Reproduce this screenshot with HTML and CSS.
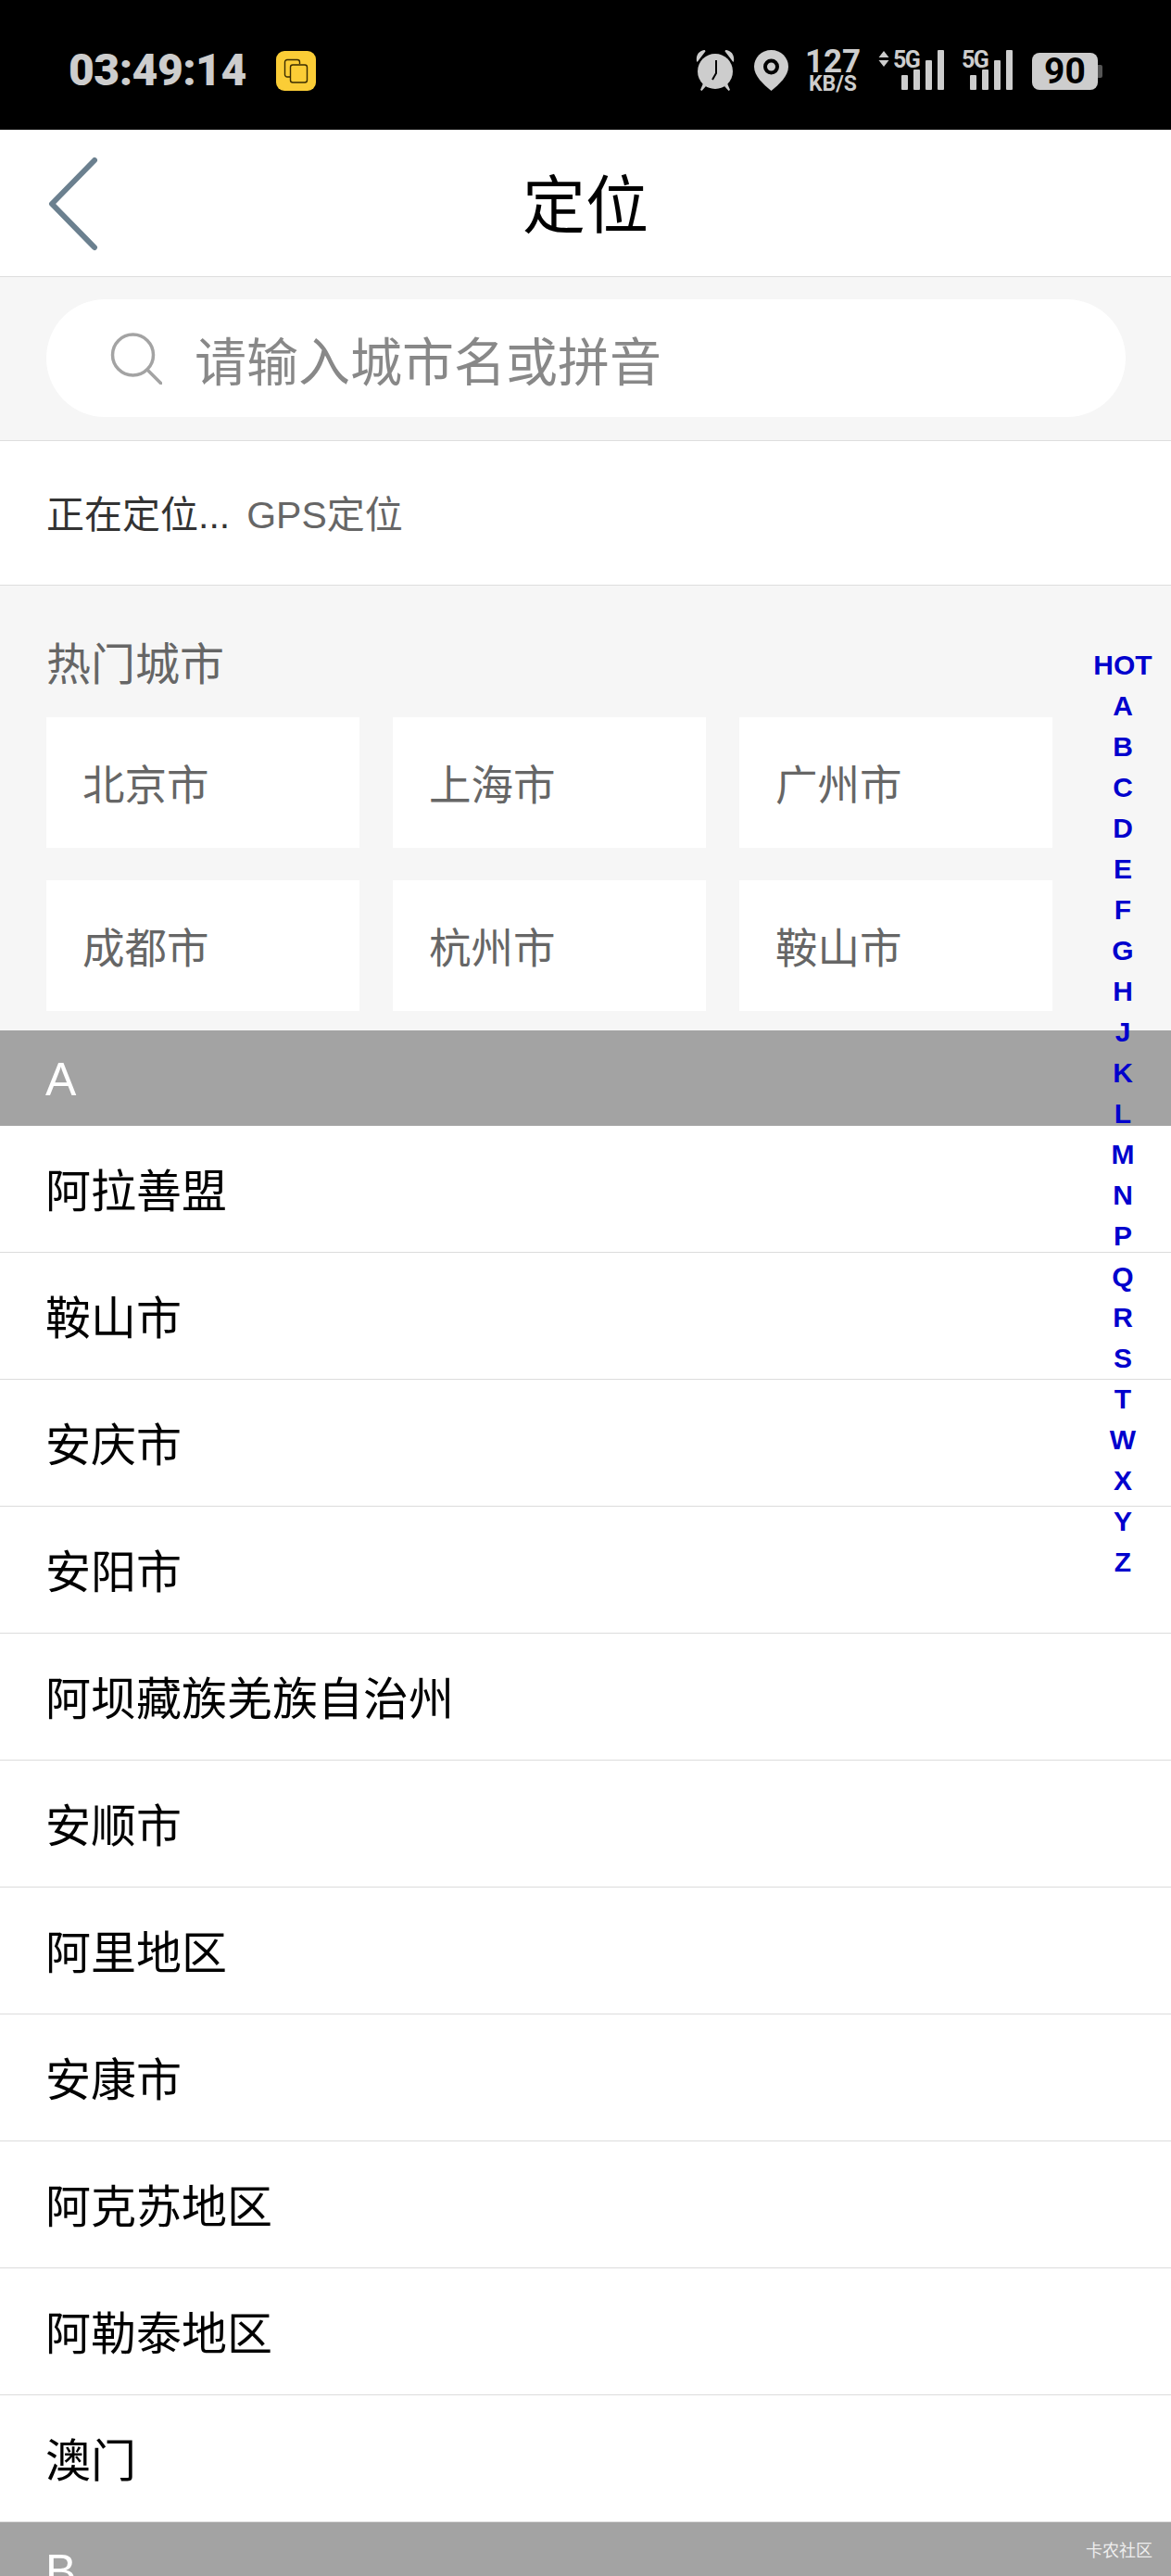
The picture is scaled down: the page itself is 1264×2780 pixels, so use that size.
FILE: index.html
```html
<!DOCTYPE html>
<html lang="zh-CN">
<head>
<meta charset="UTF-8">
<meta name="viewport" content="width=device-width, initial-scale=1.0">
<title>定位</title>
<link rel="stylesheet" href="styles.css">
</head>
<body>
<div class="status-bar">
    <div class="status-left">
        <span class="clock">03:49:14</span>
        <span class="app-badge">
            <svg width="27" height="27" viewBox="0 0 27 27" fill="none" stroke="#3a2c00" stroke-width="1.4">
                <path d="M7 20H4a2.500 2.500 0 0 1-2.500-2.500V4A2.500 2.500 0 0 1 4 1.500h11A2.500 2.500 0 0 1 17.500 4v2"/>
                <rect x="7.500" y="7" width="18" height="19" rx="2.500"/>
            </svg>
        </span>
    </div>
    <div class="status-right">
        <svg class="icon-alarm" width="44" height="46" viewBox="0 0 44 46" fill="#cdcdcd">
            <path d="M2 13C1 7 4 2 10 1c1 0 2 1 1 2L3 13.500c-.4.500-.9.300-1-.5zM42 13c1-6-2-11-8-12-1 0-2 1-1 2l8 10.500c.4.500.9.300 1-.5z"/>
            <path d="M9 37l-3 7 1.500 1L12 40zM35 37l3 7-1.500 1L32 40z"/>
            <circle cx="22" cy="24" r="19"/>
            <path d="M23 12v14l-4 7" fill="none" stroke="#000" stroke-width="2"/>
        </svg>
        <svg class="icon-pin" width="37" height="44" viewBox="0 0 37 44">
            <path d="M18.500 0C8 0 0 8 0 18c0 10 10 19 18.500 26C27 37 37 28 37 18 37 8 29 0 18.500 0z" fill="#cdcdcd"/>
            <circle cx="18.500" cy="18" r="6.500" fill="none" stroke="#000" stroke-width="4"/>
        </svg>
        <div class="net-speed">
            <span class="net-num">127</span>
            <span class="net-unit">KB/S</span>
        </div>
        <div class="signal signal-first">
            <svg class="signal-arrows" width="12" height="17" viewBox="0 0 12 17" fill="#cdcdcd">
                <path d="M6 0l5.500 7H.5zM6 17l5.500-7H.5z"/>
            </svg>
            <span class="signal-label">5G</span>
            <div class="bars">
                <i class="bar bar-1"></i><i class="bar bar-2"></i><i class="bar bar-3"></i><i class="bar bar-4"></i>
            </div>
        </div>
        <div class="signal signal-second">
            <span class="signal-label">5G</span>
            <div class="bars">
                <i class="bar bar-1"></i><i class="bar bar-2"></i><i class="bar bar-3"></i><i class="bar bar-4"></i>
            </div>
        </div>
        <div class="battery">
            <span class="battery-body">90</span>
            <i class="battery-nub"></i>
        </div>
    </div>
</div>

<header class="nav-bar">
    <svg class="back" width="56" height="102" viewBox="0 0 56 102" fill="none" stroke="#6b808f" stroke-width="6" stroke-linecap="round" stroke-linejoin="round">
        <path d="M52 4L6 51l46 47"/>
    </svg>
    <h1 class="nav-title">定位</h1>
</header>

<div class="search-wrap">
    <div class="search-box">
        <svg class="search-icon" width="56" height="56" viewBox="0 0 56 56" fill="none" stroke="#a3a3a3" stroke-width="3.500">
            <circle cx="24.500" cy="24" r="22"/>
            <path d="M40 40l15 15" stroke-linecap="round"/>
        </svg>
        <span class="search-hint">请输入城市名或拼音</span>
    </div>
</div>

<div class="locate-row">
    <span class="locate-state">正在定位...</span>
    <span class="locate-type">GPS定位</span>
</div>

<section class="hot">
    <h2 class="hot-title">热门城市</h2>
    <div class="hot-grid">
        <div class="hot-item">北京市</div>
        <div class="hot-item">上海市</div>
        <div class="hot-item">广州市</div>
        <div class="hot-item">成都市</div>
        <div class="hot-item">杭州市</div>
        <div class="hot-item">鞍山市</div>
    </div>
</section>

<div class="letter">A</div>
<ul class="city-list">
    <li>阿拉善盟</li>
    <li>鞍山市</li>
    <li>安庆市</li>
    <li>安阳市</li>
    <li>阿坝藏族羌族自治州</li>
    <li>安顺市</li>
    <li>阿里地区</li>
    <li>安康市</li>
    <li>阿克苏地区</li>
    <li>阿勒泰地区</li>
    <li>澳门</li>
</ul>
<div class="letter">B</div>

<nav class="index-bar">
    <a>HOT</a><a>A</a><a>B</a><a>C</a><a>D</a><a>E</a><a>F</a><a>G</a><a>H</a><a>J</a><a>K</a><a>L</a>
    <a>M</a><a>N</a><a>P</a><a>Q</a><a>R</a><a>S</a><a>T</a><a>W</a><a>X</a><a>Y</a><a>Z</a>
</nav>

<div class="watermark">卡农社区</div>
</body>
</html>
```

FILE: styles.css
```css
* {
    box-sizing: border-box;
}
html, body {
    margin: 0;
    padding: 0;
}
body {
    position: relative;
    width: 1264px;
    height: 2780px;
    overflow: hidden;
    background-color: #fff;
    font-family: "Liberation Sans", "Noto Sans CJK SC", sans-serif;
}

/* status bar */
.status-bar {
    display: flex;
    justify-content: space-between;
    height: 140px;
    padding: 53px 74px 0 74px;
    background-color: #000;
    color: #cdcdcd;
}
.status-left {
    display: flex;
    align-items: flex-start;
}
.clock {
    width: 224px;
    font-family: Roboto, sans-serif;
    font-size: 48px;
    font-weight: 900;
    letter-spacing: -0.5px;
    line-height: 46px;
}
.app-badge {
    display: flex;
    align-items: center;
    justify-content: center;
    width: 43px;
    height: 43px;
    margin-top: 2px;
    border-radius: 9px;
    background-color: #fbcd36;
}
.status-right {
    display: flex;
    align-items: flex-start;
}
.icon-pin {
    margin: 1px 0 0 20px;
}
.net-speed {
    display: flex;
    flex-direction: column;
    align-items: center;
    width: 52px;
    margin-left: 22px;
    font-family: Roboto, sans-serif;
    font-weight: 700;
}
.net-num {
    font-size: 35px;
    line-height: 28px;
}
.net-unit {
    font-size: 23px;
    line-height: 20px;
}
.signal {
    position: relative;
    height: 44px;
}
.signal-first {
    width: 71px;
    margin-left: 23px;
}
.signal-second {
    width: 55px;
    margin-left: 19px;
}
.signal-arrows {
    position: absolute;
    left: 0;
    top: 2px;
}
.signal-label {
    position: absolute;
    top: 1px;
    font-family: Roboto, sans-serif;
    font-size: 25px;
    font-weight: 700;
    line-height: 22px;
    letter-spacing: -1.5px;
}
.signal-first .signal-label {
    left: 16px;
}
.signal-second .signal-label {
    left: 0;
}
.bars {
    position: absolute;
    right: 0;
    bottom: 0;
    display: flex;
    align-items: flex-end;
    gap: 6px;
}
.bar {
    display: block;
    width: 7px;
    background-color: #cdcdcd;
    border-radius: 1px;
}
.bar-1 { height: 16px; }
.bar-2 { height: 22px; }
.bar-3 { height: 32px; }
.bar-4 { height: 43px; }
.battery {
    display: flex;
    align-items: center;
    margin: 4px 0 0 21px;
}
.battery-body {
    width: 71px;
    height: 40px;
    border-radius: 8px;
    background-color: #cdcdcd;
    color: #000;
    font-family: Roboto, sans-serif;
    font-size: 39px;
    font-weight: 700;
    line-height: 41px;
    text-align: center;
}
.battery-nub {
    display: block;
    width: 5px;
    height: 14px;
    background-color: #555;
    border-radius: 0 2px 2px 0;
}

/* nav */
.nav-bar {
    position: relative;
    display: flex;
    align-items: center;
    justify-content: center;
    height: 159px;
    padding-bottom: 6px;
    border-bottom: 1px solid #dedede;
}
.back {
    position: absolute;
    left: 50px;
    top: 29px;
}
.nav-title {
    margin: 0;
    font-size: 68px;
    font-weight: 400;
    color: #000;
}

/* search */
.search-wrap {
    height: 177px;
    padding: 24px 50px 0 50px;
    background-color: #f6f6f6;
    border-bottom: 1px solid #dedede;
}
.search-box {
    display: flex;
    align-items: center;
    height: 127px;
    margin-right: -1px;
    padding-left: 69px;
    border-radius: 64px;
    background-color: #fff;
}
.search-hint {
    margin-left: 35px;
    font-size: 56px;
    color: #888;
}

/* current location */
.locate-row {
    display: flex;
    align-items: center;
    gap: 18px;
    height: 156px;
    padding: 0 0 3px 50px;
    border-bottom: 1px solid #dedede;
    font-size: 41px;
}
.locate-state {
    color: #333;
}
.locate-type {
    color: #666;
}

/* hot cities */
.hot {
    height: 480px;
    padding: 58px 0 0 50px;
    background-color: #f6f6f6;
}
.hot-title {
    margin: 0 0 28px 0;
    font-size: 48px;
    font-weight: 400;
    line-height: 56px;
    color: #666;
}
.hot-grid {
    display: grid;
    grid-template-columns: repeat(3, 338px);
    grid-auto-rows: 141px;
    column-gap: 36px;
    row-gap: 35px;
}
.hot-item {
    display: flex;
    align-items: center;
    padding: 0 0 1px 39px;
    background-color: #fff;
    font-size: 45.5px;
    color: #666;
}

/* city list */
.letter {
    height: 103px;
    padding-left: 49px;
    background-color: #a3a3a3;
    font-size: 50px;
    line-height: 106px;
    color: #fff;
}
.city-list {
    margin: 0;
    padding: 0;
    list-style: none;
}
.city-list li {
    height: 137px;
    padding: 4px 0 0 49px;
    border-bottom: 1px solid #dcdcdc;
    font-size: 49px;
    line-height: 134px;
    color: #000;
}

/* overlays */
.index-bar {
    position: absolute;
    top: 696px;
    right: 0;
    display: flex;
    flex-direction: column;
    align-items: center;
    width: 104px;
    font-size: 30px;
    font-weight: 700;
    line-height: 44px;
    color: #0000cd;
}
.watermark {
    position: absolute;
    top: 2738px;
    right: 20px;
    font-size: 18px;
    color: #eee;
}
```
